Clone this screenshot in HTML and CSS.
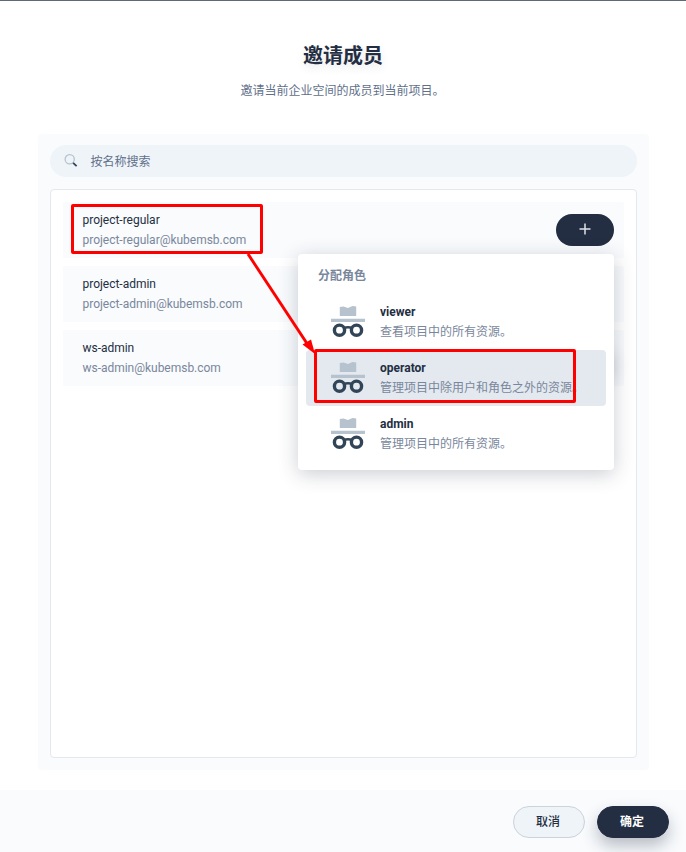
FILE: index.html
```html
<!DOCTYPE html>
<html lang="zh-CN">
<head>
<meta charset="utf-8">
<title>邀请成员</title>
<link rel="stylesheet" href="styles.css">
</head>
<body>
<svg class="defs" width="0" height="0">
  <symbol id="role" viewBox="0 0 40 40">
    <path class="hat" d="M11.800 5 15.500 4.500 20 6 24.500 4 28.200 4.500V14H11.800zM3 16.800H37V20H3z"/>
    <g class="glasses"><circle cx="11.500" cy="28.200" r="5.100"/><circle cx="28.500" cy="28.200" r="5.100"/><path class="bridge" d="M15.500 26.200Q20 24.200 24.500 26.200"/></g>
  </symbol>
</svg>
<main class="dialog">
  <header class="header">
    <h1>邀请成员</h1>
    <p>邀请当前企业空间的成员到当前项目。</p>
  </header>
  <section class="panel">
    <div class="search">
      <svg width="16" height="16" viewBox="0 0 16 16"><circle cx="6.700" cy="6.300" r="4.600"/><path d="M10.100 9.800 13.600 13.200"/></svg>
      <span>按名称搜索</span>
    </div>
    <div class="list">
      <article class="member">
        <div class="info"><b>project-regular</b><span>project-regular@kubemsb.com</span></div>
        <div class="action">
          <button class="add" aria-label="添加"><svg width="12" height="12" viewBox="0 0 12 12"><path d="M.5 6H11.500M6 .5V11.500"/></svg></button>
          <div class="menu">
            <h2>分配角色</h2>
            <div class="role"><svg><use href="#role"/></svg><div><b>viewer</b><span>查看项目中的所有资源。</span></div></div>
            <div class="role active"><svg><use href="#role"/></svg><div><b>operator</b><span>管理项目中除用户和角色之外的资源。</span></div></div>
            <div class="role"><svg><use href="#role"/></svg><div><b>admin</b><span>管理项目中的所有资源。</span></div></div>
          </div>
        </div>
      </article>
      <article class="member">
        <div class="info"><b>project-admin</b><span>project-admin@kubemsb.com</span></div>
      </article>
      <article class="member">
        <div class="info"><b>ws-admin</b><span>ws-admin@kubemsb.com</span></div>
        <div class="action"><button class="add raised" aria-label="添加"></button></div>
      </article>
    </div>
  </section>
  <footer class="footer">
    <button class="btn">取消</button>
    <button class="btn primary">确定</button>
  </footer>
</main>
<svg class="marks" width="686" height="852" viewBox="0 0 686 852">
  <rect x="72.500" y="205.500" width="189" height="47" rx=".5"/>
  <rect x="315.500" y="350.500" width="259" height="51" rx=".5"/>
  <path d="M248 254 308 345"/>
  <path class="tip" d="M315 354 302.500 344.500 311 339.500z"/>
</svg>
</body>
</html>
```
FILE: styles.css
```css
* { box-sizing: border-box; }
body {
  margin: 0;
  background: #fff;
  font-family: Roboto, "Noto Sans CJK SC", sans-serif;
  font-size: 12px;
  line-height: 20px;
  color: #242e42;
}
h1, h2, p { margin: 0; }
button { font: inherit; padding: 0; border: 0; }
.defs { position: absolute; }
.dialog {
  display: flex;
  flex-direction: column;
  height: 852px;
  border-top: 1px solid #5f6878;
}
.header { height: 133px; padding-top: 39px; text-align: center; }
.header h1 {
  font-size: 20px;
  line-height: 32px;
  font-weight: 700;
  text-shadow: 0 4px 8px rgba(36, 46, 66, .1);
}
.header p { margin-top: 9px; padding-right: 1px; color: #5f708a; }
.panel {
  display: flex;
  flex-direction: column;
  gap: 12px;
  width: 611px;
  height: 636px;
  margin-left: 38px;
  padding: 11px 12px 12px;
  border-radius: 4px;
  background: #f9fbfd;
}
.search {
  display: flex;
  align-items: center;
  gap: 12px;
  flex: none;
  height: 32px;
  padding-left: 12.5px;
  border-radius: 16px;
  background: #eff4f9;
  color: #5f708a;
}
.search span { padding-top: 1px; }
.search svg { fill: none; stroke: #b6c2cd; stroke-width: 1.3; }
.search path { stroke: #36435c; stroke-width: 1.8; }
.list {
  display: flex;
  flex-direction: column;
  gap: 8px;
  flex: 1;
  padding: 12px;
  border: 1px solid #e3e9ef;
  border-radius: 4px;
  background: #fff;
}
.member {
  display: flex;
  justify-content: space-between;
  align-items: center;
  height: 56px;
  padding: 0 10px 0 19.500px;
  border-radius: 2px;
  background: #f9fbfd;
}
.info b, .info span, .role b, .role span { display: block; white-space: nowrap; }
.info { padding-bottom: 1px; letter-spacing: -.02px; }
.info b { font-weight: 400; }
.info span, .role span { color: #79879c; }
.action { position: relative; }
.add {
  display: flex;
  align-items: center;
  justify-content: center;
  width: 58px;
  height: 32px;
  border-radius: 16px;
  background: #242e42;
}
.add svg { margin-top: -2px; fill: none; stroke: #dfe2e7; stroke-width: 1.5; }
.raised { box-shadow: 0 8px 16px rgba(36, 46, 66, .2); }
.menu {
  position: absolute;
  z-index: 1;
  top: 40px;
  right: 0;
  width: 316px;
  height: 216px;
  padding: 12px 8px 8px;
  border-radius: 4px;
  background: #fff;
  box-shadow: 0 4px 20px rgba(36, 46, 66, .24);
}
.menu h2 {
  margin: 0 0 8px 12px;
  font-size: 12px;
  line-height: 20px;
  font-weight: 700;
  color: #79879c;
}
.role {
  display: flex;
  align-items: center;
  gap: 12px;
  height: 56px;
  padding-left: 22px;
  border-radius: 4px;
}
.role svg { flex: none; width: 40px; height: 40px; }
.role b { font-weight: 700; }
.active { background: #e3e9ef; }
.hat { fill: #b6c2cd; }
.glasses { fill: none; stroke: #324558; stroke-width: 3.4; }
.bridge { stroke-width: 2.5; }
.footer {
  display: flex;
  justify-content: flex-end;
  gap: 12px;
  height: 62px;
  margin-top: auto;
  padding: 16px 17px 14px 0;
  background: #f9fbfd;
}
.btn {
  width: 72px;
  height: 32px;
  padding-right: 2px;
  border: 1px solid #ccd3db;
  border-radius: 16px;
  background: #eff4f9;
  color: #242e42;
  font-weight: 500;
}
.primary {
  border-color: #242e42;
  background: #242e42;
  color: #fff;
  font-weight: 700;
  box-shadow: 0 8px 16px rgba(36, 46, 66, .3);
}
.marks {
  position: absolute;
  z-index: 2;
  top: 0;
  left: 0;
  fill: none;
  stroke: #f00;
  stroke-width: 3;
  pointer-events: none;
}
.marks .tip { fill: #f00; stroke: none; }
```
